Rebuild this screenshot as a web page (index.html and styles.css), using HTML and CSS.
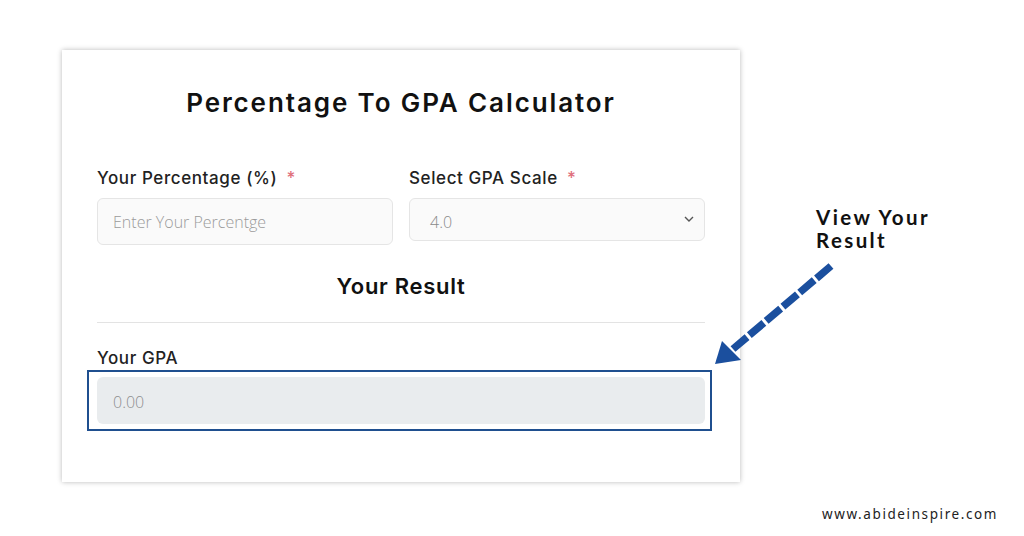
FILE: index.html
```html
<!DOCTYPE html>
<html lang="en">
<head>
<meta charset="utf-8">
<title>Percentage To GPA Calculator</title>
<link rel="stylesheet" href="styles.css">
</head>
<body>
<div class="page">
  <div class="card">
    <h1 class="title">Percentage To GPA Calculator</h1>
    <div class="fields">
      <div class="field">
        <label class="label">Your Percentage (%) <span class="req">*</span></label>
        <div class="input">Enter Your Percentge</div>
      </div>
      <div class="field">
        <label class="label">Select GPA Scale <span class="req">*</span></label>
        <div class="select">
          <span>4.0</span>
          <svg class="chev" width="10" height="6" viewBox="0 0 10 6"><path d="M1 1l4 4 4-4" fill="none" stroke="#555" stroke-width="1.4"/></svg>
        </div>
      </div>
    </div>
    <h2 class="result-title">Your Result</h2>
    <hr class="rule">
    <div class="label gpa-label">Your GPA</div>
    <div class="highlight">
      <div class="output">0.00</div>
    </div>
  </div>
  <div class="note">View Your<br>Result</div>
  <svg class="arrow" width="140" height="120" viewBox="0 0 140 120">
    <line x1="126" y1="9" x2="28" y2="92" stroke="#1b4f9e" stroke-width="7.5" stroke-dasharray="19 3"/>
    <polygon points="10,107 17,84 36,103" fill="#1b4f9e"/>
  </svg>
  <div class="footer">www.abideinspire.com</div>
</div>
</body>
</html>
```
FILE: styles.css
```css
* { box-sizing: border-box; }
html, body { margin: 0; padding: 0; background: #fff; }
body { font-family: "Inter", "Noto Sans", sans-serif; color: #1a1a1a; }
.page {
  position: relative;
  width: 1024px;
  height: 536px;
  padding: 50px 0 0 62px;
}
.card {
  width: 678px;
  height: 432px;
  background: #fff;
  box-shadow: 0 0 5px rgba(0,0,0,0.28);
  padding: 35px 35px 0 35px;
}
.title {
  margin: 0;
  font-size: 26px;
  line-height: 36px;
  font-weight: 600;
  text-align: center;
  color: #111;
  letter-spacing: 1.9px;
}
.fields {
  display: flex;
  gap: 16px;
  margin-top: 45px;
  align-items: flex-start;
}
.field { flex: 1; display: flex; flex-direction: column; }
.label {
  font-size: 17px;
  line-height: 24px;
  font-weight: 500;
  color: #222;
  letter-spacing: 0.6px;
}
.req { color: #e0707c; margin-left: 4px; }
.input {
  margin-top: 8px;
  height: 47px;
  border: 1px solid #e5e5e5;
  border-radius: 6px;
  background: #fafafa;
  font-family: "Open Sans", sans-serif;
  font-weight: 300;
  font-size: 16px;
  color: #9a9a9a;
  display: flex;
  align-items: center;
  padding-left: 15px;
}
.select {
  margin-top: 8px;
  height: 43px;
  border: 1px solid #e5e5e5;
  border-radius: 6px;
  background: #fafafa;
  font-family: "Open Sans", sans-serif;
  font-weight: 300;
  font-size: 16px;
  color: #8a8a8a;
  display: flex;
  align-items: center;
  justify-content: space-between;
  padding: 4px 10px 0 20px;
}
.chev { margin-top: -6px; }
.result-title {
  margin: 26px 0 0;
  font-size: 22px;
  line-height: 30px;
  font-weight: 600;
  text-align: center;
  color: #111;
  letter-spacing: 0.7px;
}
.rule {
  margin: 21px 0 0;
  border: 0;
  border-top: 1px solid #e3e3e3;
}
.gpa-label { margin-top: 23px; }
.highlight {
  margin: 0 -7px 0 -10px;
  border: 2px solid #1f4f8f;
  padding: 5px 5px 5px 8px;
}
.output {
  height: 47px;
  border-radius: 6px;
  background: #e9ecee;
  font-family: "Open Sans", sans-serif;
  font-weight: 300;
  font-size: 16px;
  color: #8e8e8e;
  display: flex;
  align-items: center;
  padding: 3px 0 0 16px;
}
.note {
  position: absolute;
  left: 816px;
  top: 206px;
  font-family: "Lato", sans-serif;
  font-weight: 700;
  font-size: 20.5px;
  line-height: 23px;
  letter-spacing: 2.4px;
  color: #111;
}
.arrow {
  position: absolute;
  left: 705px;
  top: 257px;
}
.footer {
  position: absolute;
  left: 822px;
  top: 505px;
  font-family: "Noto Sans", sans-serif;
  font-size: 13.5px;
  letter-spacing: 1.6px;
  color: #222;
}
```
